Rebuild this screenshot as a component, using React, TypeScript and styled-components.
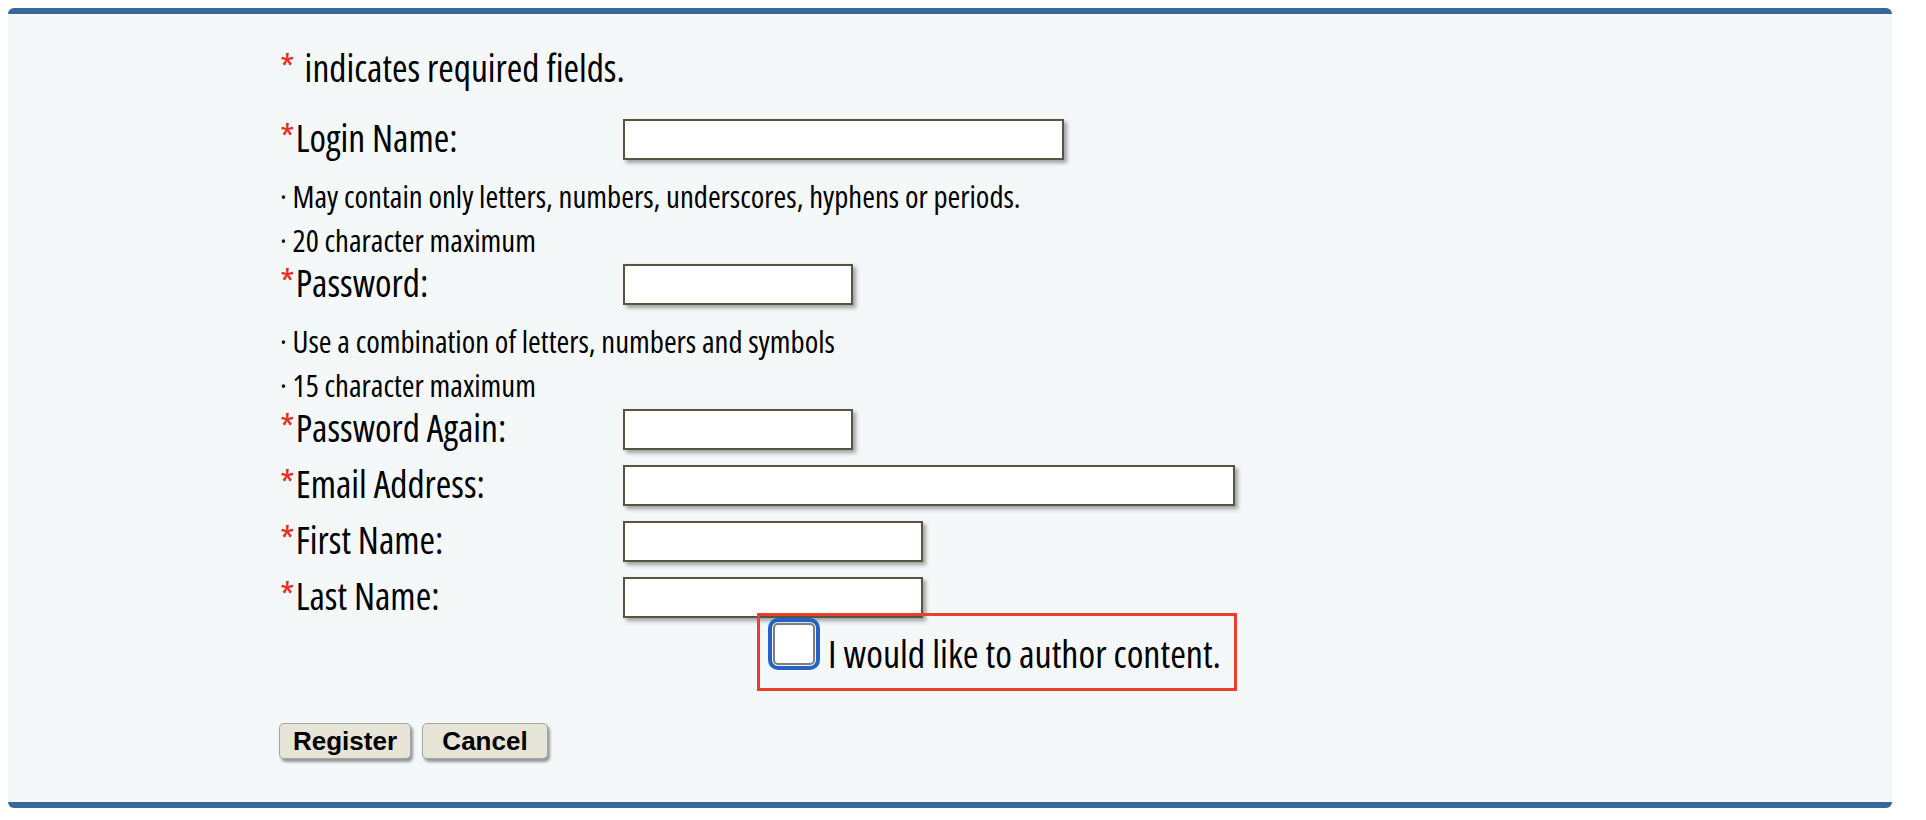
import React from 'react';
import styled, { createGlobalStyle } from 'styled-components';

const GlobalStyle = createGlobalStyle`
  * { box-sizing: border-box; }
  body {
    margin: 8px;
    background: #ffffff;
    color: #000000;
    font-family: "Open Sans", "Noto Sans", sans-serif;
    font-stretch: condensed;
  }
`;

type Field = {
  label: string;
  width: number;
  type?: string;
  hints?: string[];
};

const fields: Field[] = [
  {
    label: 'Login Name:',
    width: 441,
    hints: ['May contain only letters, numbers, underscores, hyphens or periods.', '20 character maximum'],
  },
  {
    label: 'Password:',
    width: 230,
    type: 'password',
    hints: ['Use a combination of letters, numbers and symbols', '15 character maximum'],
  },
  { label: 'Password Again:', width: 230, type: 'password' },
  { label: 'Email Address:', width: 612 },
  { label: 'First Name:', width: 300 },
  { label: 'Last Name:', width: 300 },
];

export default function App() {
  return (
    <>
      <GlobalStyle />
      <Panel>
        <Note>
          <Star $gap={3}>*</Star> indicates required fields.
        </Note>
        {fields.map(f => (
          <React.Fragment key={f.label}>
            <FieldRow>
              <Label>
                <Star $gap={1}>*</Star>
                {f.label}
              </Label>
              <TextInput type={f.type || 'text'} $width={f.width} />
            </FieldRow>
            {f.hints && (
              <Hints>
                {f.hints.map(h => (
                  <Hint key={h}>· {h}</Hint>
                ))}
              </Hints>
            )}
          </React.Fragment>
        ))}
        <AuthorBox>
          <Check type="checkbox" />
          <CheckLabel>I would like to author content.</CheckLabel>
        </AuthorBox>
        <Buttons>
          <Button $width={132}>Register</Button>
          <Button $width={126}>Cancel</Button>
        </Buttons>
      </Panel>
    </>
  );
}

const Panel = styled.div`
  width: 1884px;
  height: 800px;
  background: #f4f8f9;
  border-top: 6px solid #36689c;
  border-bottom: 6px solid #36689c;
  border-radius: 6px;
  padding: 31px 0 0 270px;
  display: flex;
  flex-direction: column;
  align-items: flex-start;
`;

const Star = styled.span<{ $gap: number }>`
  color: #e5301f;
  margin-right: ${p => p.$gap}px;
`;

const Note = styled.div`
  font-size: 37.5px;
  line-height: 46px;
  padding-bottom: 2px;
  margin: 0 0 26px 2px;
`;

const FieldRow = styled.div`
  display: flex;
  align-items: center;
  height: 41px;
  margin-bottom: 15px;
`;

const Label = styled.label`
  width: 345px;
  padding: 0 0 5px 2px;
  font-size: 37.5px;
  line-height: 39px;
  white-space: nowrap;
`;

const TextInput = styled.input<{ $width: number }>`
  width: ${p => p.$width}px;
  height: 41px;
  margin: 0;
  background: #ffffff;
  border: 2px solid #59543f;
  border-radius: 0;
  box-shadow: 3px 3px 4px rgba(0, 0, 0, 0.35);
  font-size: 24px;
  outline: none;
`;

const Hints = styled.div`
  padding-top: 1px;
`;

const Hint = styled.div`
  font-size: 30.8px;
  line-height: 40px;
  padding: 0 0 4px 2px;
  white-space: nowrap;
`;

const AuthorBox = styled.div`
  display: flex;
  align-items: flex-start;
  width: 480px;
  height: 78px;
  margin: -20px 0 0 479px;
  padding: 7px 16px 0 13px;
  border: 3px solid #e8402a;
`;

const Check = styled.input`
  appearance: none;
  flex: none;
  width: 42px;
  height: 42px;
  margin: 0;
  background: #ffffff;
  border: 2px solid #7d7d7d;
  border-radius: 5px;
  outline: 4px solid #2462c8;
  outline-offset: 1px;
`;

const CheckLabel = styled.span`
  margin: 6px 0 0 13px;
  font-size: 38px;
  line-height: 48px;
  white-space: nowrap;
`;

const Buttons = styled.div`
  display: flex;
  gap: 11px;
  margin: 32px 0 0 1px;
`;

const Button = styled.button<{ $width: number }>`
  width: ${p => p.$width}px;
  height: 36px;
  padding: 0;
  background: #e7e4d8;
  border: 1px solid #a3a3a3;
  border-radius: 5px;
  box-shadow: 2px 3px 3px rgba(0, 0, 0, 0.4);
  font-family: "Liberation Sans", Arial, sans-serif;
  font-stretch: normal;
  font-weight: bold;
  font-size: 26px;
  color: #000000;
`;
